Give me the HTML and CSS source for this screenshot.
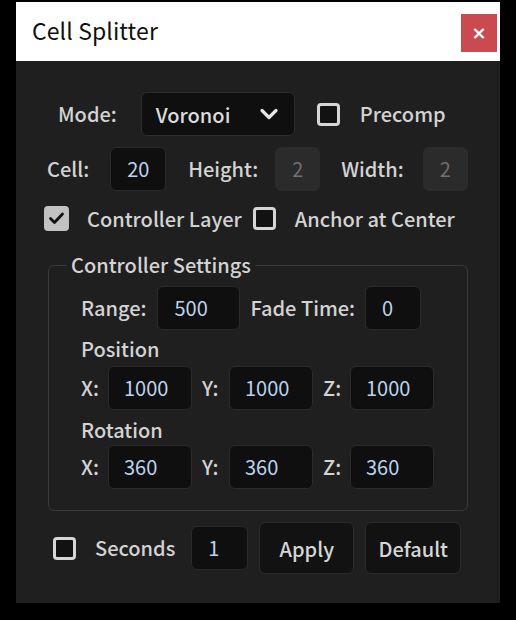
FILE: index.html
```html
<!DOCTYPE html>
<html lang="en">
<head>
<meta charset="utf-8">
<title>Cell Splitter</title>
<link rel="stylesheet" href="styles.css">
</head>
<body>
<div class="window">
  <header class="titlebar">
    <span class="title">Cell Splitter</span>
    <button class="close" type="button">×</button>
  </header>
  <main class="panel">
    <div class="row row-mode">
      <span class="lbl">Mode:</span>
      <div class="select">
        <span>Voronoi</span>
        <svg class="chev" width="20" height="14" viewBox="0 0 20 14"><path d="M3 3.5 L10 10.5 L17 3.5" fill="none" stroke="#e6e6e6" stroke-width="3.2" stroke-linecap="round" stroke-linejoin="round"/></svg>
      </div>
      <span class="box box-mode"></span>
      <span class="lbl">Precomp</span>
    </div>

    <div class="row row-cell">
      <span class="lbl">Cell:</span>
      <span class="field w56 gap-cell">20</span>
      <span class="lbl gap-h">Height:</span>
      <span class="field disabled w45 gap-hin">2</span>
      <span class="lbl gap-w">Width:</span>
      <span class="field disabled w45 gap-win">2</span>
    </div>

    <div class="row row-checks">
      <span class="box checked">
        <svg width="25" height="25" viewBox="0 0 25 25"><path d="M6.5 12.5 L10.5 16.5 L18.5 8" fill="none" stroke="#111" stroke-width="2.8" stroke-linecap="round" stroke-linejoin="round"/></svg>
      </span>
      <span class="lbl gap-cl">Controller Layer</span>
      <span class="box gap-anchor-box"></span>
      <span class="lbl gap-anchor">Anchor at Center</span>
    </div>

    <fieldset class="group">
      <legend>Controller Settings</legend>
      <div class="row row-range">
        <span class="lbl">Range:</span>
        <span class="field w83 gap-range">500</span>
        <span class="lbl gap-fade">Fade Time:</span>
        <span class="field w56 gap-fadein">0</span>
      </div>
      <div class="sub sub-pos">Position</div>
      <div class="row row-xyz">
        <span class="axis">X:</span><span class="field w84">1000</span>
        <span class="axis">Y:</span><span class="field w84">1000</span>
        <span class="axis">Z:</span><span class="field w84">1000</span>
      </div>
      <div class="sub sub-rot">Rotation</div>
      <div class="row row-xyz row-rot">
        <span class="axis">X:</span><span class="field w84">360</span>
        <span class="axis">Y:</span><span class="field w84">360</span>
        <span class="axis">Z:</span><span class="field w84">360</span>
      </div>
    </fieldset>

    <div class="row row-bottom">
      <span class="box"></span>
      <span class="lbl gap-sec">Seconds</span>
      <span class="field w57 gap-secin">1</span>
      <button class="btn btn-apply" type="button">Apply</button>
      <button class="btn btn-default" type="button">Default</button>
    </div>
  </main>
</div>
</body>
</html>
```

FILE: styles.css
```css
* { box-sizing: border-box; }

html, body {
  margin: 0;
  padding: 0;
  background: #000;
}

body {
  padding: 2px 0 0 16px;
  font-family: "Noto Sans CJK TC", "Noto Sans", sans-serif;
}

.window {
  width: 484px;
}

.titlebar {
  height: 59px;
  background: #fff;
  display: flex;
  align-items: center;
  justify-content: space-between;
  padding: 0 3px 0 16px;
}

.title {
  font-size: 23px;
  color: #111;
  margin-top: -4px;
  letter-spacing: 0.1px;
}

.close {
  width: 36px;
  height: 38px;
  margin-top: 2px;
  border: 0;
  padding: 0;
  background: #c94a4f;
  color: #fff;
  font-family: "DejaVu Sans", sans-serif;
  font-size: 18px;
  font-weight: bold;
  line-height: 38px;
}

.panel {
  height: 542px;
  background: #1f1f1f;
  padding-top: 31px;
  color: #d3d3d3;
  font-size: 20px;
  font-weight: 500;
}

.row {
  display: flex;
  align-items: center;
}

.lbl { white-space: nowrap; line-height: 24px; }

/* mode row */
.row-mode { padding-left: 42px; height: 44px; }
.select {
  width: 154px;
  height: 44px;
  margin-left: 24px;
  margin-right: 22px;
  background: #0f0f0f;
  border: 1px solid #2d2d2d;
  border-radius: 6px;
  display: flex;
  align-items: center;
  justify-content: space-between;
  padding: 0 15px 0 14px;
  color: #dcdcdc;
}
.chev { display: block; }
.box-mode { margin-right: 20px; }

/* generic fields */
.field {
  height: 44px;
  background: #0f0f0f;
  border: 1px solid #2a2a2a;
  border-radius: 6px;
  color: #bcd3ee;
  display: flex;
  align-items: center;
  padding-left: 16px;
  line-height: 24px;
  font-weight: 400;
}
.field.disabled {
  background: #2b2b2b;
  border-color: #2b2b2b;
  color: #707070;
}
.w45 { width: 45px; }
.w56 { width: 56px; }
.w57 { width: 57px; }
.w83 { width: 83px; }
.w84 { width: 84px; }

/* cell row */
.row-cell { padding-left: 31px; margin-top: 11px; }
.gap-cell { margin-left: 21px; }
.gap-h { margin-left: 22px; }
.gap-hin { margin-left: 17px; }
.gap-w { margin-left: 21px; }
.gap-win { margin-left: 19px; }

/* checkboxes */
.box {
  width: 23px;
  height: 23px;
  flex: none;
  border: 3px solid #d6d6d6;
  border-radius: 4px;
  background: #121212;
}
.box.checked {
  width: 25px;
  height: 25px;
  border: 0;
  background: #c2c2c2;
}
.box.checked svg { display: block; }

.row-checks { padding-left: 28px; margin-top: 15px; height: 25px; }
.gap-cl { margin-left: 18px; }
.gap-anchor-box { margin-left: 11px; }
.gap-anchor { margin-left: 19px; }

/* group */
.group {
  margin: 22px 0 0 32px;
  width: 420px;
  border: 1px solid #383838;
  border-radius: 6px;
  padding: 0 0 21px 0;
}
.group legend {
  margin-left: 18px;
  padding: 0 4px;
  line-height: 24px;
  color: #d3d3d3;
}
.group .row, .group .sub { margin-left: 32px; }

.row-range { margin-top: 9px; }
.gap-range { margin-left: 11px; }
.gap-fade { margin-left: 10px; }
.gap-fadein { margin-left: 10px; }

.sub { line-height: 24px; }
.sub-pos { margin-top: 7px; }
.sub-rot { margin-top: 8px; }

.row-xyz { margin-top: 5px; }
.row-rot { margin-top: 3px; }
.axis { width: 27px; flex: none; line-height: 24px; }
.axis ~ .axis { margin-left: 10px; width: 27px; }
.axis + .field { padding-left: 15px; }

/* bottom row */
.row-bottom { padding-left: 37px; margin-top: 11px; height: 52px; }
.gap-sec { margin-left: 19px; }
.gap-secin { margin-left: 16px; }
.btn {
  height: 52px;
  background: #121212;
  border: 1px solid #2c2c2c;
  border-radius: 6px;
  color: #d6d6d6;
  font-family: inherit;
  font-size: 20px;
  font-weight: 500;
  padding: 0;
}
.btn-apply { width: 95px; margin-left: 11px; }
.btn-default { width: 96px; margin-left: 11px; }
```
